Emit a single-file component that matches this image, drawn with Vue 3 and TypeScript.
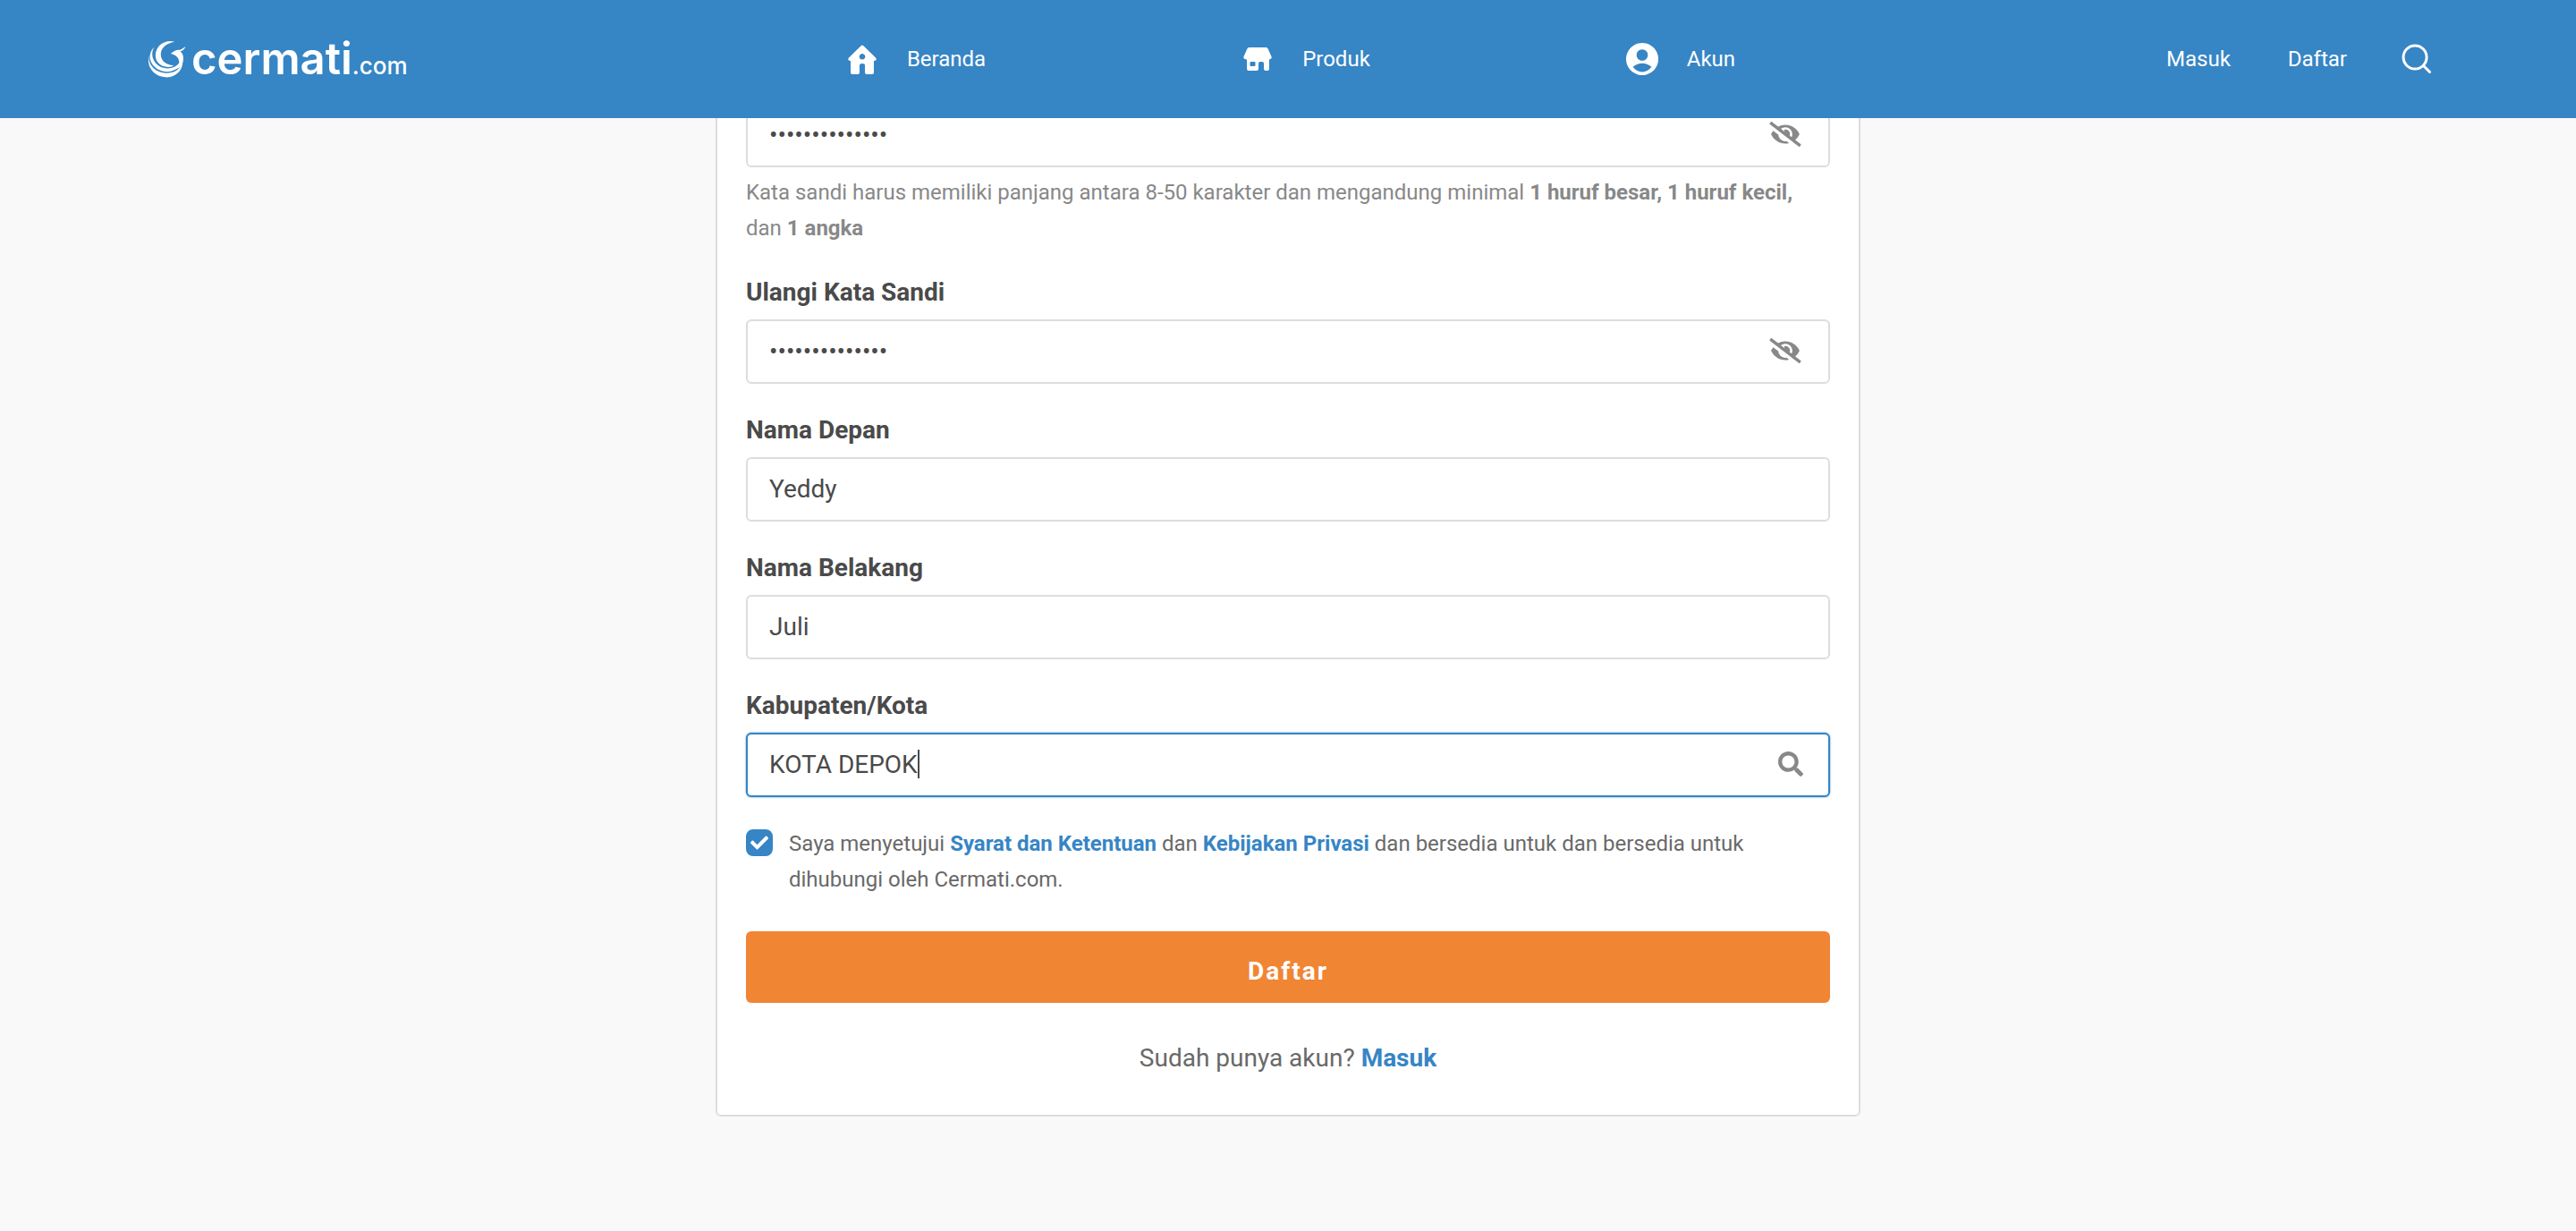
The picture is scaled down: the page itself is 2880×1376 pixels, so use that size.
<script setup lang="ts">
import { reactive } from 'vue'

interface NavItem {
  label: string
  icon: 'home' | 'store' | 'account'
}

const navItems: NavItem[] = [
  { label: 'Beranda', icon: 'home' },
  { label: 'Produk', icon: 'store' },
  { label: 'Akun', icon: 'account' },
]

const form = reactive({
  password: 'RahasiaKita123',
  repeatPassword: 'RahasiaKita123',
  firstName: 'Yeddy',
  lastName: 'Juli',
  city: 'KOTA DEPOK',
  agreed: true,
})

const eyeSlash =
  'M320 400c-75.85 0-137.25-58.71-142.9-133.11L72.2 185.82c-13.79 17.3-26.48 35.59-36.72 55.59a32.35 32.35 0 0 0 0 29.19C89.71 376.41 197.07 448 320 448c26.91 0 52.87-4 77.89-10.46L346 397.39a144.13 144.13 0 0 1-26 2.61zm313.82 58.1l-110.55-85.44a331.25 331.25 0 0 0 81.25-102.07 32.35 32.35 0 0 0 0-29.19C550.29 135.59 442.93 64 320 64a308.15 308.15 0 0 0-147.32 37.7L45.46 3.37A16 16 0 0 0 23 6.18L3.37 31.45A16 16 0 0 0 6.18 53.9l588.36 454.73a16 16 0 0 0 22.46-2.81l19.64-25.27a16 16 0 0 0-2.82-22.45zm-183.72-142l-39.3-30.38A94.75 94.75 0 0 0 416 256a94.76 94.76 0 0 0-121.31-92.21A47.65 47.65 0 0 1 304 192a46.64 46.64 0 0 1-1.54 10l-73.61-56.89A142.31 142.31 0 0 1 320 112a143.92 143.92 0 0 1 144 144c0 21.63-5.29 41.79-13.9 60.11z'
</script>

<template>
  <header class="topbar">
    <a class="brand" href="#" aria-label="cermati.com">
      <svg class="brand-mark" viewBox="4 4 128 128" aria-hidden="true">
        <path d="M93 9C62 0 28 20 28 56 28 78 44 93 66 95 78 96 86 93 90 89 68 90 46 76 46 52 46 30 64 14 93 9z" />
        <path d="M24 27C14 42 14 64 28 81 42 98 64 103 84 98 98 94 108 85 112 75 112 92 98 106 80 110 54 115 28 103 16 84 4 64 8 42 24 27z" />
        <path d="M6 52C4 58 5 76 12 88 26 110 54 120 82 114 104 109 117 94 120 70 124 96 108 122 78 129 50 134 22 122 10 98 3 84 2 66 6 52z" />
        <path d="M80 50c9-8 17-13 26-13 7 0 12-3 24-12-4 11-9 14-18 16 9 7 13 19 10 33-3 17-14 28-34 30 17-10 22-19 20-30-2-12-12-20-28-24z" />
      </svg>
      <span class="brand-name">cermati<span class="brand-suffix">.com</span></span>
    </a>

    <nav class="nav">
      <a v-for="item in navItems" :key="item.label" class="nav-link" href="#">
        <span class="nav-icon">
          <svg v-if="item.icon === 'home'" width="32" height="33" viewBox="0 0 32 33" aria-hidden="true">
            <path
              fill-rule="evenodd"
              d="M14.6 1.2Q16 0 17.4 1.2L31 14.6Q32.3 16.2 31 17.6Q30.2 18.2 29 18V31Q29 33 27 33H21Q19 33 19 31V23Q19 21 16 21Q13 21 13 23V31Q13 33 11 33H5Q3 33 3 31V18Q1.8 18.2 1 17.6Q-.3 16.2 1 14.6ZM16 10a3.3 3.3 0 1 0 .01 0z"
            />
          </svg>
          <svg v-else-if="item.icon === 'store'" width="32" height="26" viewBox="0 0 32 26" aria-hidden="true">
            <path
              fill-rule="evenodd"
              d="M7 0H25Q27 0 27.6 1.4L31.6 10.6Q32.2 13 29 13.6V24Q29 26 27 26H25Q23 26 23 24V18Q23 16 21 16H19Q17 16 17 18V24Q17 26 15 26H6Q4 26 4 24V13.6Q-.2 13 .4 10.6L4.4 1.4Q5 0 7 0ZM8.5 16Q7.5 16 7.5 17V20Q7.5 21 8.5 21H12.5Q13.5 21 13.5 20V17Q13.5 16 12.5 16Z"
            />
          </svg>
          <svg v-else width="36" height="36" viewBox="2 2 20 20" aria-hidden="true">
            <path
              fill-rule="evenodd"
              d="M12 2a10 10 0 1 0 .01 0zM12 6a3.5 3.5 0 1 1-.01 0zM6.2 16.9C8 15.2 10 14.6 12 14.6s4 .6 5.8 2.3C16.200 19 14.200 20 12 20s-4.200-1-5.800-3.100z"
            />
          </svg>
        </span>
        {{ item.label }}
      </a>
    </nav>

    <div class="account">
      <div class="account-links">
        <a href="#">Masuk</a>
        <a href="#">Daftar</a>
      </div>
      <button class="icon-button" type="button" aria-label="Cari">
        <svg width="36" height="36" viewBox="0 0 36 36" fill="none" stroke="#fff" stroke-width="3" stroke-linecap="round" aria-hidden="true">
          <circle cx="16" cy="16" r="13" />
          <path d="M25.500 25.500L32.500 32.500" />
        </svg>
      </button>
    </div>
  </header>

  <main class="page">
    <form class="card" @submit.prevent>
      <div class="field">
        <div class="control">
          <input v-model="form.password" class="input" type="password" aria-label="Kata Sandi" autocomplete="off" />
          <button class="icon-button reveal" type="button" aria-label="Tampilkan kata sandi">
            <svg class="eye" viewBox="0 0 640 512" aria-hidden="true"><path :d="eyeSlash" /></svg>
          </button>
        </div>
        <p class="hint">
          Kata sandi harus memiliki panjang antara 8-50 karakter dan mengandung minimal
          <strong>1 huruf besar, 1 huruf kecil,</strong> dan <strong>1 angka</strong>
        </p>
      </div>

      <div class="field">
        <label class="label" for="repeat-password">Ulangi Kata Sandi</label>
        <div class="control">
          <input id="repeat-password" v-model="form.repeatPassword" class="input" type="password" autocomplete="off" />
          <button class="icon-button reveal" type="button" aria-label="Tampilkan ulang kata sandi">
            <svg class="eye" viewBox="0 0 640 512" aria-hidden="true"><path :d="eyeSlash" /></svg>
          </button>
        </div>
      </div>

      <div class="field">
        <label class="label" for="first-name">Nama Depan</label>
        <div class="control">
          <input id="first-name" v-model="form.firstName" class="input" type="text" />
        </div>
      </div>

      <div class="field">
        <label class="label" for="last-name">Nama Belakang</label>
        <div class="control">
          <input id="last-name" v-model="form.lastName" class="input" type="text" />
        </div>
      </div>

      <div class="field">
        <label class="label" for="city">Kabupaten/Kota</label>
        <div class="control control-active">
          <input id="city" v-model="form.city" class="input input-fit" type="text" />
          <span class="caret"></span>
          <svg class="search" viewBox="0 0 512 512" aria-hidden="true">
            <path
              d="M505 442.700L405.300 343c-4.500-4.500-10.600-7-17-7H372c27.600-35.300 44-79.700 44-128C416 93.100 322.900 0 208 0S0 93.100 0 208s93.100 208 208 208c48.300 0 92.700-16.400 128-44v16.300c0 6.400 2.500 12.500 7 17l99.700 99.700c9.400 9.400 24.600 9.400 33.900 0l28.300-28.300c9.400-9.400 9.400-24.600.1-34zM208 336c-70.700 0-128-57.200-128-128 0-70.700 57.200-128 128-128 70.700 0 128 57.200 128 128 0 70.700-57.200 128-128 128z"
            />
          </svg>
        </div>
      </div>

      <div class="consent">
        <span class="tick">
          <input id="agree" v-model="form.agreed" class="tick-box" type="checkbox" />
          <svg v-if="form.agreed" class="tick-mark" viewBox="0 0 512 512" aria-hidden="true">
            <path
              d="M173.898 439.404l-166.400-166.400c-9.997-9.997-9.997-26.206 0-36.204l36.203-36.204c9.997-9.998 26.207-9.998 36.204 0L192 312.690 432.095 72.596c9.997-9.997 26.207-9.997 36.204 0l36.203 36.204c9.997 9.997 9.997 26.206 0 36.204l-294.400 294.401c-9.998 9.997-26.207 9.997-36.204-.001z"
            />
          </svg>
        </span>
        <label class="consent-text" for="agree">
          Saya menyetujui <a class="link" href="#">Syarat dan Ketentuan</a> dan
          <a class="link" href="#">Kebijakan Privasi</a> dan bersedia untuk dan bersedia untuk dihubungi oleh
          Cermati.com.
        </label>
      </div>

      <button class="submit" type="submit">Daftar</button>

      <p class="login">Sudah punya akun? <a class="link" href="#">Masuk</a></p>
    </form>
  </main>
</template>

<style>
body {
  background: #f9f9f9;
  font-family: Roboto, "Liberation Sans", sans-serif;
}
</style>

<style scoped>
.topbar {
  position: fixed;
  inset: 0 0 auto;
  z-index: 1;
  box-sizing: border-box;
  height: 132px;
  padding: 0 160px;
  display: grid;
  grid-template-columns: 1fr auto 1fr;
  align-items: center;
  background: #3685c5;
  color: #fff;
  font-size: 24px;
  line-height: 40px;
}

.topbar a {
  color: inherit;
  text-decoration: none;
}

.topbar svg {
  fill: #fff;
}

.brand {
  display: flex;
  align-items: center;
  gap: 6px;
  padding-left: 6px;
}

.brand-mark {
  width: 42px;
  height: 42px;
}

.brand-name {
  padding-top: 8px;
  font-family: Inter, "Liberation Sans", sans-serif;
  font-size: 49px;
  font-weight: 600;
  line-height: 56px;
}

.brand-suffix {
  font-size: 26px;
  font-weight: 500;
}

.nav {
  display: flex;
  gap: 280px;
}

.nav-link {
  display: flex;
  align-items: center;
  gap: 26px;
}

.nav-icon {
  display: flex;
  align-items: center;
  justify-content: center;
  width: 48px;
  height: 48px;
}

.account {
  display: flex;
  align-items: center;
  justify-content: flex-end;
  gap: 60px;
}

.account-links {
  display: flex;
  gap: 64px;
}

.icon-button {
  display: flex;
  padding: 0;
  border: 0;
  background: none;
  cursor: pointer;
}

.topbar .icon-button svg {
  fill: none;
}

.page {
  padding: 81px 40px 128px;
}

.card {
  box-sizing: border-box;
  max-width: 1280px;
  margin: 0 auto;
  padding: 32px 32px 41px;
  border: 2px solid #ddd;
  border-radius: 6px;
  background: #fff;
}

.field {
  margin-bottom: 30px;
}

.label {
  display: block;
  margin-bottom: 8px;
  color: #4a4a4a;
  font-size: 28px;
  font-weight: 700;
  line-height: 44px;
}

.control {
  box-sizing: border-box;
  height: 72px;
  padding: 0 28px 2px 24px;
  display: flex;
  align-items: center;
  border: 2px solid #ddd;
  border-radius: 6px;
  background: #fff;
}

.control-active {
  border-color: #3685c5;
  box-shadow: 0 0 2px #3685c5;
}

.input {
  flex: 1;
  min-width: 0;
  height: 44px;
  padding: 0;
  border: 0;
  outline: 0;
  background: none;
  color: #4a4a4a;
  font-family: inherit;
  font-size: 28px;
}

.input-fit {
  flex: none;
  field-sizing: content;
}

.caret {
  width: 2px;
  height: 32px;
  background: #4a4a4a;
}

.reveal {
  width: 40px;
  justify-content: center;
}

.eye {
  width: 36px;
  height: 28px;
  fill: #888;
}

.search {
  width: 28px;
  height: 28px;
  margin-left: auto;
  fill: #888;
}

.hint {
  margin: 8px 0 0;
  color: #888;
  font-size: 24px;
  line-height: 40px;
}

.consent {
  display: flex;
  gap: 18px;
  margin-top: 32px;
  margin-bottom: 38px;
}

.tick {
  display: grid;
  place-items: center;
  width: 30px;
  height: 38px;
}

.tick-box {
  grid-area: 1 / 1;
  appearance: none;
  width: 30px;
  height: 30px;
  margin: 0;
  border: 2px solid #3685c5;
  border-radius: 8px;
}

.tick-box:checked {
  background: #3685c5;
}

.tick-mark {
  grid-area: 1 / 1;
  width: 20px;
  height: 20px;
  fill: #fff;
  pointer-events: none;
}

.consent-text {
  flex: 1;
  color: #696969;
  font-size: 24px;
  line-height: 40px;
}

.link {
  color: #3685c5;
  font-weight: 700;
  text-decoration: none;
}

.submit {
  display: block;
  width: 100%;
  height: 80px;
  padding: 8px 0 0;
  border: 0;
  border-radius: 6px;
  background: #f08534;
  color: #fff;
  font-family: inherit;
  font-size: 28px;
  font-weight: 700;
  letter-spacing: 2px;
  cursor: pointer;
}

.login {
  margin: 40px 0 0;
  color: #696969;
  font-size: 28px;
  line-height: 44px;
  text-align: center;
}
</style>
